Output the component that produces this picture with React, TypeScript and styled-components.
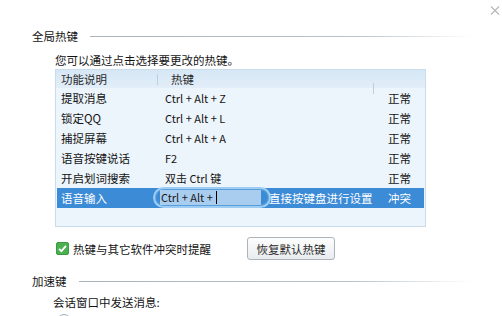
import styled, { createGlobalStyle } from "styled-components";

const GlobalStyle = createGlobalStyle`
  html, body {
    margin: 0;
    padding: 0;
    background: #ffffff;
  }
  body {
    font-family: "Noto Sans CJK SC", "Noto Sans", sans-serif;
    font-size: 11.5px;
    color: #141414;
  }
`;

interface HotkeyRow {
  name: string;
  keys: string;
  status: string;
  editing?: boolean;
}

const rows: HotkeyRow[] = [
  { name: "提取消息", keys: "Ctrl + Alt + Z", status: "正常" },
  { name: "锁定QQ", keys: "Ctrl + Alt + L", status: "正常" },
  { name: "捕捉屏幕", keys: "Ctrl + Alt + A", status: "正常" },
  { name: "语音按键说话", keys: "F2", status: "正常" },
  { name: "开启划词搜索", keys: "双击 Ctrl 键", status: "正常" },
  { name: "语音输入", keys: "Ctrl + Alt +", status: "冲突", editing: true },
];

const Page = styled.div`
  position: relative;
  width: 502px;
  height: 316px;
  overflow: hidden;
  padding-top: 28px;
  box-sizing: border-box;
`;

const CloseButton = styled.div`
  position: absolute;
  top: 2px;
  left: 490px;
  width: 10px;
  height: 9px;
`;

const SectionTitle = styled.div<{ $top?: number }>`
  display: flex;
  align-items: center;
  gap: 12px;
  padding-left: 32px;
  margin-top: ${(p) => p.$top ?? 0}px;
  line-height: 16px;
  height: 16px;
`;

const Rule = styled.div`
  flex: 1;
  height: 1px;
  margin-right: 30px;
  background: linear-gradient(to right, #a7b2bc 0%, #b9c3cb 70%, rgba(255, 255, 255, 0) 100%);
`;

const Hint = styled.div<{ $top: number; $left: number }>`
  margin-top: ${(p) => p.$top}px;
  padding-left: ${(p) => p.$left}px;
  line-height: 16px;
`;

const Table = styled.div`
  margin: 1px 0 0 55px;
  width: 371px;
  box-sizing: border-box;
  border: 1px solid #c9dcec;
  background: #edf5fc;
  padding: 0 1px 18px;
`;

const Grid = styled.div`
  display: grid;
  grid-template-columns: 101px 216px 1fr;
  align-items: center;
`;

const HeaderRow = styled(Grid)`
  height: 18px;
  margin: 0 -1px;
  background: linear-gradient(to bottom, #d6e7f5, #e2eef9);
  color: #2a2a2a;
`;

const HeaderCell = styled.div<{ $pad: number; $sep?: boolean }>`
  position: relative;
  padding-left: ${(p) => p.$pad}px;
  line-height: 18px;
  &::before {
    content: "";
    display: ${(p) => (p.$sep ? "block" : "none")};
    position: absolute;
    left: 0;
    top: 4px;
    width: 1px;
    height: 11px;
    background: #bccfdf;
  }
`;

const BodyRow = styled(Grid)<{ $active?: boolean }>`
  height: 20px;
  background: ${(p) => (p.$active ? "#3b8bd6" : "transparent")};
  color: ${(p) => (p.$active ? "#ffffff" : "#141414")};
`;

const Cell = styled.div<{ $pad: number }>`
  padding-left: ${(p) => p.$pad}px;
  line-height: 20px;
  white-space: nowrap;
  display: flex;
  align-items: center;
`;

const KeyText = styled.span`
  font-size: 11px;
`;

const KeyPill = styled.div`
  margin-left: -5px;
  width: 118px;
  height: 21px;
  box-sizing: border-box;
  border: 2px solid #9dcdf3;
  border-radius: 11px;
  box-shadow: inset 0 0 2px rgba(255, 255, 255, 0.6);
  display: flex;
  align-items: center;
  padding-left: 5px;
  margin-top: -1px;
`;

const KeyInput = styled.div`
  width: 101px;
  height: 15px;
  background: #a9cdef;
  color: #1a1a1a;
  display: flex;
  align-items: center;
  padding-left: 1px;
  box-sizing: border-box;
  line-height: 15px;
  font-size: 11px;
`;

const Caret = styled.span`
  display: inline-block;
  width: 1px;
  height: 13px;
  margin-left: 3px;
  background: #000000;
`;

const EditHint = styled.span`
  margin-left: -2px;
  color: #ffffff;
`;

const OptionRow = styled.div`
  display: flex;
  align-items: center;
  margin-top: 10px;
  padding-left: 56px;
  height: 23px;
`;

const CheckBox = styled.div`
  width: 13px;
  height: 13px;
  flex: none;
`;

const CheckLabel = styled.span`
  margin-left: 4px;
`;

const Button = styled.div`
  margin-left: 36px;
  width: 88px;
  height: 23px;
  box-sizing: border-box;
  border: 1px solid #acb3ba;
  border-radius: 3px;
  background: linear-gradient(to bottom, #fdfdfd, #e9ecee);
  display: flex;
  align-items: center;
  justify-content: center;
  color: #2a2a2a;
`;

const RadioRow = styled.div`
  margin-top: 4px;
  padding-left: 57px;
`;

const Radio = styled.div`
  width: 12px;
  height: 12px;
  border-radius: 50%;
  border: 1px solid #a9b0b6;
  background: #f6f6f6;
`;

export default function App() {
  return (
    <>
      <GlobalStyle />
      <Page>
        <CloseButton>
          <svg width="10" height="9" viewBox="0 0 10 9">
            <path d="M1 0.5 L9 8.5 M9 0.5 L1 8.5" stroke="#b8b8b8" strokeWidth="1.2" />
          </svg>
        </CloseButton>

        <SectionTitle>
          <span>全局热键</span>
          <Rule />
        </SectionTitle>
        <Hint $top={8} $left={55}>您可以通过点击选择要更改的热键。</Hint>

        <Table>
          <HeaderRow>
            <HeaderCell $pad={5}>功能说明</HeaderCell>
            <HeaderCell $pad={14} $sep>热键</HeaderCell>
            <HeaderCell $pad={14} $sep />
          </HeaderRow>
          {rows.map((row) => (
            <BodyRow key={row.name} $active={row.editing}>
              <Cell $pad={4}>{row.name}</Cell>
              <Cell $pad={row.editing ? 0 : 7}>
                {row.editing ? (
                  <>
                    <KeyPill>
                      <KeyInput>
                        {row.keys}
                        <Caret />
                      </KeyInput>
                    </KeyPill>
                    <EditHint>直接按键盘进行设置</EditHint>
                  </>
                ) : (
                  <KeyText>{row.keys}</KeyText>
                )}
              </Cell>
              <Cell $pad={14}>{row.status}</Cell>
            </BodyRow>
          ))}
        </Table>

        <OptionRow>
          <CheckBox>
            <svg width="13" height="13" viewBox="0 0 13 13">
              <rect x="0.5" y="0.5" width="12" height="12" rx="1.5" fill="#4bb04f" stroke="#3c9a40" />
              <path d="M3 6.8 L5.4 9.2 L10 3.8" fill="none" stroke="#ffffff" strokeWidth="1.8" />
            </svg>
          </CheckBox>
          <CheckLabel>热键与其它软件冲突时提醒</CheckLabel>
          <Button>恢复默认热键</Button>
        </OptionRow>

        <SectionTitle $top={13}>
          <span>加速键</span>
          <Rule />
        </SectionTitle>
        <Hint $top={5} $left={53}>会话窗口中发送消息:</Hint>
        <RadioRow>
          <Radio />
        </RadioRow>
      </Page>
    </>
  );
}
